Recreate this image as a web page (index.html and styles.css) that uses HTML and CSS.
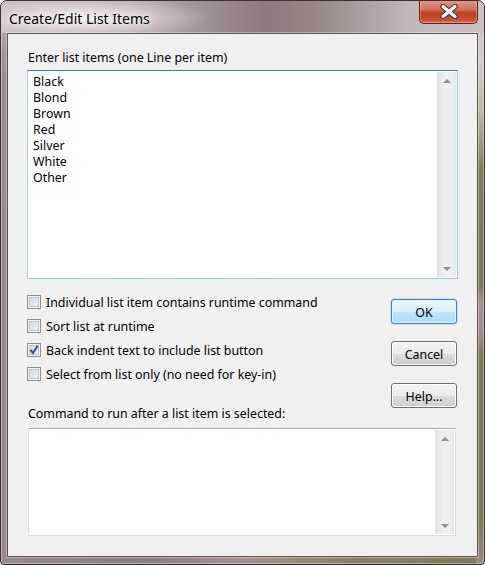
FILE: index.html
```html
<!DOCTYPE html>
<html lang="en">
<head>
  <meta charset="UTF-8" />
  <title>Create/Edit List Items</title>
  <link rel="stylesheet" href="styles.css">
</head>
<body>
  <div class="window">
    <div class="titlebar">
      <span class="title">Create/Edit List Items</span>
      <button class="close-btn" title="Close">
        <svg width="20" height="15" viewBox="0 0 20 15">
          <path d="M4 2.5 L16 12.5 M16 2.5 L4 12.5" stroke="#4a3a38" stroke-width="5.5" stroke-linecap="round" fill="none"/>
          <path d="M4 2.5 L16 12.5 M16 2.5 L4 12.5" stroke="#fff" stroke-width="3.2" stroke-linecap="round" fill="none"/>
        </svg>
      </button>
    </div>

    <div class="client">
      <div class="field-label">Enter list items (one Line per item)</div>
      <div class="textbox focused items-box">
        <div class="textbox-text">Black<br>Blond<br>Brown<br>Red<br>Silver<br>White<br>Other</div>
        <div class="vscroll">
          <span class="arrow up"></span>
          <span class="arrow down"></span>
        </div>
      </div>

      <div class="options">
        <div class="options-left">
          <label class="check"><span class="box"></span><span class="check-text">Individual list item contains runtime command</span></label>
          <label class="check"><span class="box"></span><span class="check-text">Sort list at runtime</span></label>
          <label class="check">
            <span class="box">
              <svg width="12" height="12" viewBox="0 0 12 12"><path d="M2.5 6 L5 9 L9.5 2" stroke="#3d5292" stroke-width="2" fill="none"/></svg>
            </span><span class="check-text">Back indent text to include list button</span>
          </label>
          <label class="check"><span class="box"></span><span class="check-text">Select from list only (no need for key-in)</span></label>
          <div class="field-label cmd-label">Command to run after a list item is selected:</div>
        </div>
        <div class="buttons">
          <button class="btn default">OK</button>
          <button class="btn">Cancel</button>
          <button class="btn">Help...</button>
        </div>
      </div>

      <div class="textbox cmd-box">
        <div class="textbox-text"></div>
        <div class="vscroll">
          <span class="arrow up"></span>
          <span class="arrow down"></span>
        </div>
      </div>
    </div>
  </div>
</body>
</html>
```

FILE: styles.css
```css
body {
  margin: 0;
  background: #fff;
  font-family: "Noto Sans", "Liberation Sans", sans-serif;
  font-size: 12.4px;
  color: #000;
}

.window {
  width: 485px;
  height: 565px;
  box-sizing: border-box;
  display: flex;
  flex-direction: column;
  border: 1px solid #3a3234;
  border-radius: 7px 7px 4px 4px;
  overflow: hidden;
  background:
    linear-gradient(to bottom, #c9bfc1 0, #d2ccc6 60px, #bcb9a2 110px, #817c5e 170px, #7e795a 285px, #a98f8c 300px, #a68e8a 330px, #7f7a5c 355px, #7f7a5c 520px, #9e8c82 565px) right top / 8px 100% no-repeat,
    linear-gradient(to bottom, #b8abae, #9b8b8f 80px, #978a8d) left top / 8px 100% no-repeat,
    linear-gradient(to right, #9a8a8e, #8c7f7e 30%, #a5928d 50%, #8a8066 75%, #7f7a5c) left bottom / 100% 9px no-repeat,
    #9a8c8f;
  box-shadow: inset 0 0 0 1px rgba(255, 255, 255, 0.35);
}

.titlebar {
  height: 32px;
  display: flex;
  justify-content: space-between;
  align-items: flex-start;
  background:
    radial-gradient(ellipse 130px 22px at 80px 17px, rgba(255, 255, 255, 0.8), rgba(255, 255, 255, 0)),
    linear-gradient(to right, #c5babd 0%, #b5a8ab 30%, #8b7a7e 55%, #978789 65%, #c2b7b9 85%, #cbc2c3 100%);
}

.title {
  padding: 8px 0 0 8px;
  font-size: 14px;
  line-height: 20px;
  color: #000;
  text-shadow: 0 0 8px #fff, 0 0 4px rgba(255, 255, 255, 0.8);
}

.close-btn {
  width: 59px;
  height: 24px;
  margin: -1px 6px 0 0;
  padding: 0;
  display: flex;
  align-items: center;
  justify-content: center;
  border: 1px solid #5b2219;
  border-top: none;
  border-radius: 0 0 5px 5px;
  background: linear-gradient(to bottom, #e29a89 0%, #d2735e 40%, #c0412a 55%, #c8482e 80%, #d9694a 100%);
  box-shadow: inset 0 0 0 1px rgba(255, 210, 200, 0.4);
}

.client {
  flex: 1;
  margin: 0 6px 7px 6px;
  padding: 15px 19px 0 19px;
  background: #f0f0f0;
  border: 1px solid #5b5557;
  box-shadow: 0 0 0 1px rgba(255, 255, 255, 0.35);
}

.field-label {
  line-height: 16px;
  padding: 1px 0 0 1px;
  height: 15px;
}

.textbox {
  display: flex;
  box-sizing: border-box;
  background: #fff;
  border: 1px solid #dbdfe6;
  border-top-color: #abadb3;
}

.textbox.focused {
  border-color: #a4c9e3;
  border-top-color: #3d7bad;
}

.textbox-text {
  flex: 1;
  padding: 3px 4px 1px 5px;
  line-height: 16px;
}

.items-box {
  height: 209px;
  margin-top: 5px;
}

.cmd-box {
  height: 108px;
  margin: 7px 2px 0 1px;
}

.vscroll {
  width: 19px;
  margin: 1px;
  box-sizing: border-box;
  display: flex;
  flex-direction: column;
  justify-content: space-between;
  background: linear-gradient(to right, #e3e3e3, #f0f0f0 40%, #eeeeee 80%, #e7e7e7);
  border-left: 1px solid #e6e6e6;
}

.arrow {
  height: 17px;
  display: flex;
  align-items: center;
  justify-content: center;
}

.arrow::before {
  content: "";
  border-left: 4px solid transparent;
  border-right: 4px solid transparent;
}

.arrow.up::before {
  border-bottom: 4px solid #8f8f8f;
}

.arrow.down::before {
  border-top: 4px solid #8f8f8f;
}

.options {
  display: flex;
  justify-content: space-between;
  margin-top: 16px;
}

.options-left {
  display: flex;
  flex-direction: column;
  gap: 10px;
}

.check {
  height: 14px;
  display: flex;
  align-items: center;
  gap: 5px;
  line-height: 16px;
}

.check-text {
  margin-top: 2px;
}

.box {
  width: 14px;
  height: 14px;
  box-sizing: border-box;
  display: flex;
  align-items: center;
  justify-content: center;
  border: 1px solid #8e8f8f;
  background: linear-gradient(135deg, #d3d4d6, #f7f7f7);
  box-shadow: inset 0 0 0 1px #f4f4f4, inset 0 0 0 2px #c3c6cb;
}

.cmd-label {
  margin-top: 14px;
}

.buttons {
  display: flex;
  flex-direction: column;
  gap: 17px;
  padding-top: 4px;
  margin-right: 1px;
}

.btn {
  width: 66px;
  height: 25px;
  padding: 1px 0 0 0;
  font-family: inherit;
  font-size: 12.4px;
  color: #000;
  border: 1px solid #707070;
  border-radius: 3px;
  background: linear-gradient(to bottom, #f2f2f2 0%, #ebebeb 50%, #dddddd 51%, #cfcfcf 100%);
  box-shadow: inset 0 0 0 1px #fcfcfc;
}

.btn.default {
  border-color: #3c7fb1;
  background: linear-gradient(to bottom, #eaf6fd 0%, #d9f0fc 50%, #bee6fd 51%, #a7d9f5 100%);
  box-shadow: inset 0 0 0 1px #e2f3fc, 0 0 2px rgba(60, 127, 177, 0.5);
}
```
